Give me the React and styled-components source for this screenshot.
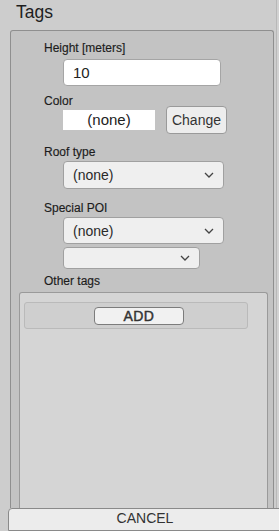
import React from "react";
import styled, { createGlobalStyle } from "styled-components";

const Global = createGlobalStyle`
  html, body { margin: 0; padding: 0; background: #cdcdcd; }
  body { font-family: "Liberation Sans", Arial, sans-serif; color: #222; }
  * { box-sizing: border-box; }
`;

const Screen = styled.div`
  width: 279px;
  height: 531px;
  display: flex;
  flex-direction: column;
  overflow: hidden;
  background: linear-gradient(to right, transparent 276px, #b8b8b8 276px, #b8b8b8 277px, #d2d2d2 277px);
`;

const Title = styled.div`
  height: 30px;
  padding: 1px 0 0 16px;
  font-size: 17.5px;
  line-height: 22px;
  color: #1e1e1e;
  flex: none;
`;

const Panel = styled.div`
  flex: 1;
  min-height: 0;
  margin: 0 5px 0 10px;
  background: #c3c3c3;
  border: 1px solid #8f8f8f;
  border-bottom: none;
  border-radius: 3px 3px 0 0;
  display: flex;
  flex-direction: column;
  padding-top: 10px;
`;

const Label = styled.div`
  font-size: 12px;
  line-height: 14px;
  margin: ${(p) => p.$mt || 0}px 0 0 33px;
  color: #1c1c1c;
  -webkit-text-stroke: 0.15px #1c1c1c;
`;

const TextInput = styled.div`
  margin: 4px 0 0 52px;
  width: 158px;
  height: 27px;
  background: #fff;
  border: 1px solid #a5a5a5;
  border-radius: 4px;
  font-size: 15px;
  line-height: 25px;
  padding-left: 9px;
  color: #222;
`;

const ColorRow = styled.div`
  display: flex;
  align-items: center;
  margin: -2px 0 0 52px;
  height: 28px;
`;

const ColorField = styled.div`
  width: 92px;
  height: 20px;
  background: #fff;
  text-align: center;
  font-size: 15px;
  line-height: 20px;
  color: #222;
`;

const Button = styled.div`
  margin-left: 11px;
  width: 61px;
  height: 28px;
  background: #ededed;
  border: 1px solid #9a9a9a;
  border-radius: 4px;
  font-size: 14px;
  line-height: 26px;
  text-align: center;
  color: #333;
`;

const Select = styled.div`
  margin: ${(p) => p.$mt}px 0 0 52px;
  width: ${(p) => p.$w}px;
  height: ${(p) => p.$h}px;
  background: #efefef;
  border: 1px solid #a0a0a0;
  border-radius: 4px;
  display: flex;
  align-items: center;
  justify-content: space-between;
  padding: 0 9px 0 9px;
  font-size: 14px;
  color: #2a2a2a;
  flex: none;
`;

const Chevron = () => (
  <svg width="10" height="6" viewBox="0 0 10 6">
    <path d="M1 1 L5 5 L9 1" fill="none" stroke="#444" strokeWidth="1.3" />
  </svg>
);

const TagsBox = styled.div`
  flex: 1;
  margin: 4px 5px 0 8px;
  background: #d5d5d5;
  border: 1px solid #9a9a9a;
  border-bottom: none;
  border-radius: 3px 3px 0 0;
  padding: 9px 0 0 4px;
`;

const TagRow = styled.div`
  width: 224px;
  height: 27px;
  background: #cfcfcf;
  border: 1px solid #bababa;
  border-radius: 3px;
  padding: 4px 0 0 69px;
`;

const AddButton = styled.div`
  width: 90px;
  height: 18px;
  background: #f1f1f1;
  border: 1px solid #7c7c7c;
  border-radius: 4px;
  font-size: 14px;
  letter-spacing: 0.4px;
  -webkit-text-stroke: 0.45px #333;
  line-height: 16px;
  text-align: center;
  color: #333;
`;

const Cancel = styled.div`
  flex: none;
  height: 23px;
  margin-left: 8px;
  margin-right: -3px;
  background: #ececec;
  border: 1px solid #8a8a8a;
  border-radius: 4px 0 0 0;
  font-size: 14px;
  line-height: 19px;
  text-align: center;
  color: #333;
`;

export default function App() {
  return (
    <>
      <Global />
      <Screen>
        <Title>Tags</Title>
        <Panel>
          <Label>Height [meters]</Label>
          <TextInput>10</TextInput>
          <Label $mt={8}>Color</Label>
          <ColorRow>
            <ColorField>(none)</ColorField>
            <Button>Change</Button>
          </ColorRow>
          <Label $mt={11}>Roof type</Label>
          <Select $mt={2} $w={161} $h={28}>
            <span>(none)</span>
            <Chevron />
          </Select>
          <Label $mt={12}>Special POI</Label>
          <Select $mt={2} $w={161} $h={27}>
            <span>(none)</span>
            <Chevron />
          </Select>
          <Select $mt={3} $w={137} $h={22}>
            <span></span>
            <Chevron />
          </Select>
          <Label $mt={5}>Other tags</Label>
          <TagsBox>
            <TagRow>
              <AddButton>ADD</AddButton>
            </TagRow>
          </TagsBox>
        </Panel>
        <Cancel>CANCEL</Cancel>
      </Screen>
    </>
  );
}
